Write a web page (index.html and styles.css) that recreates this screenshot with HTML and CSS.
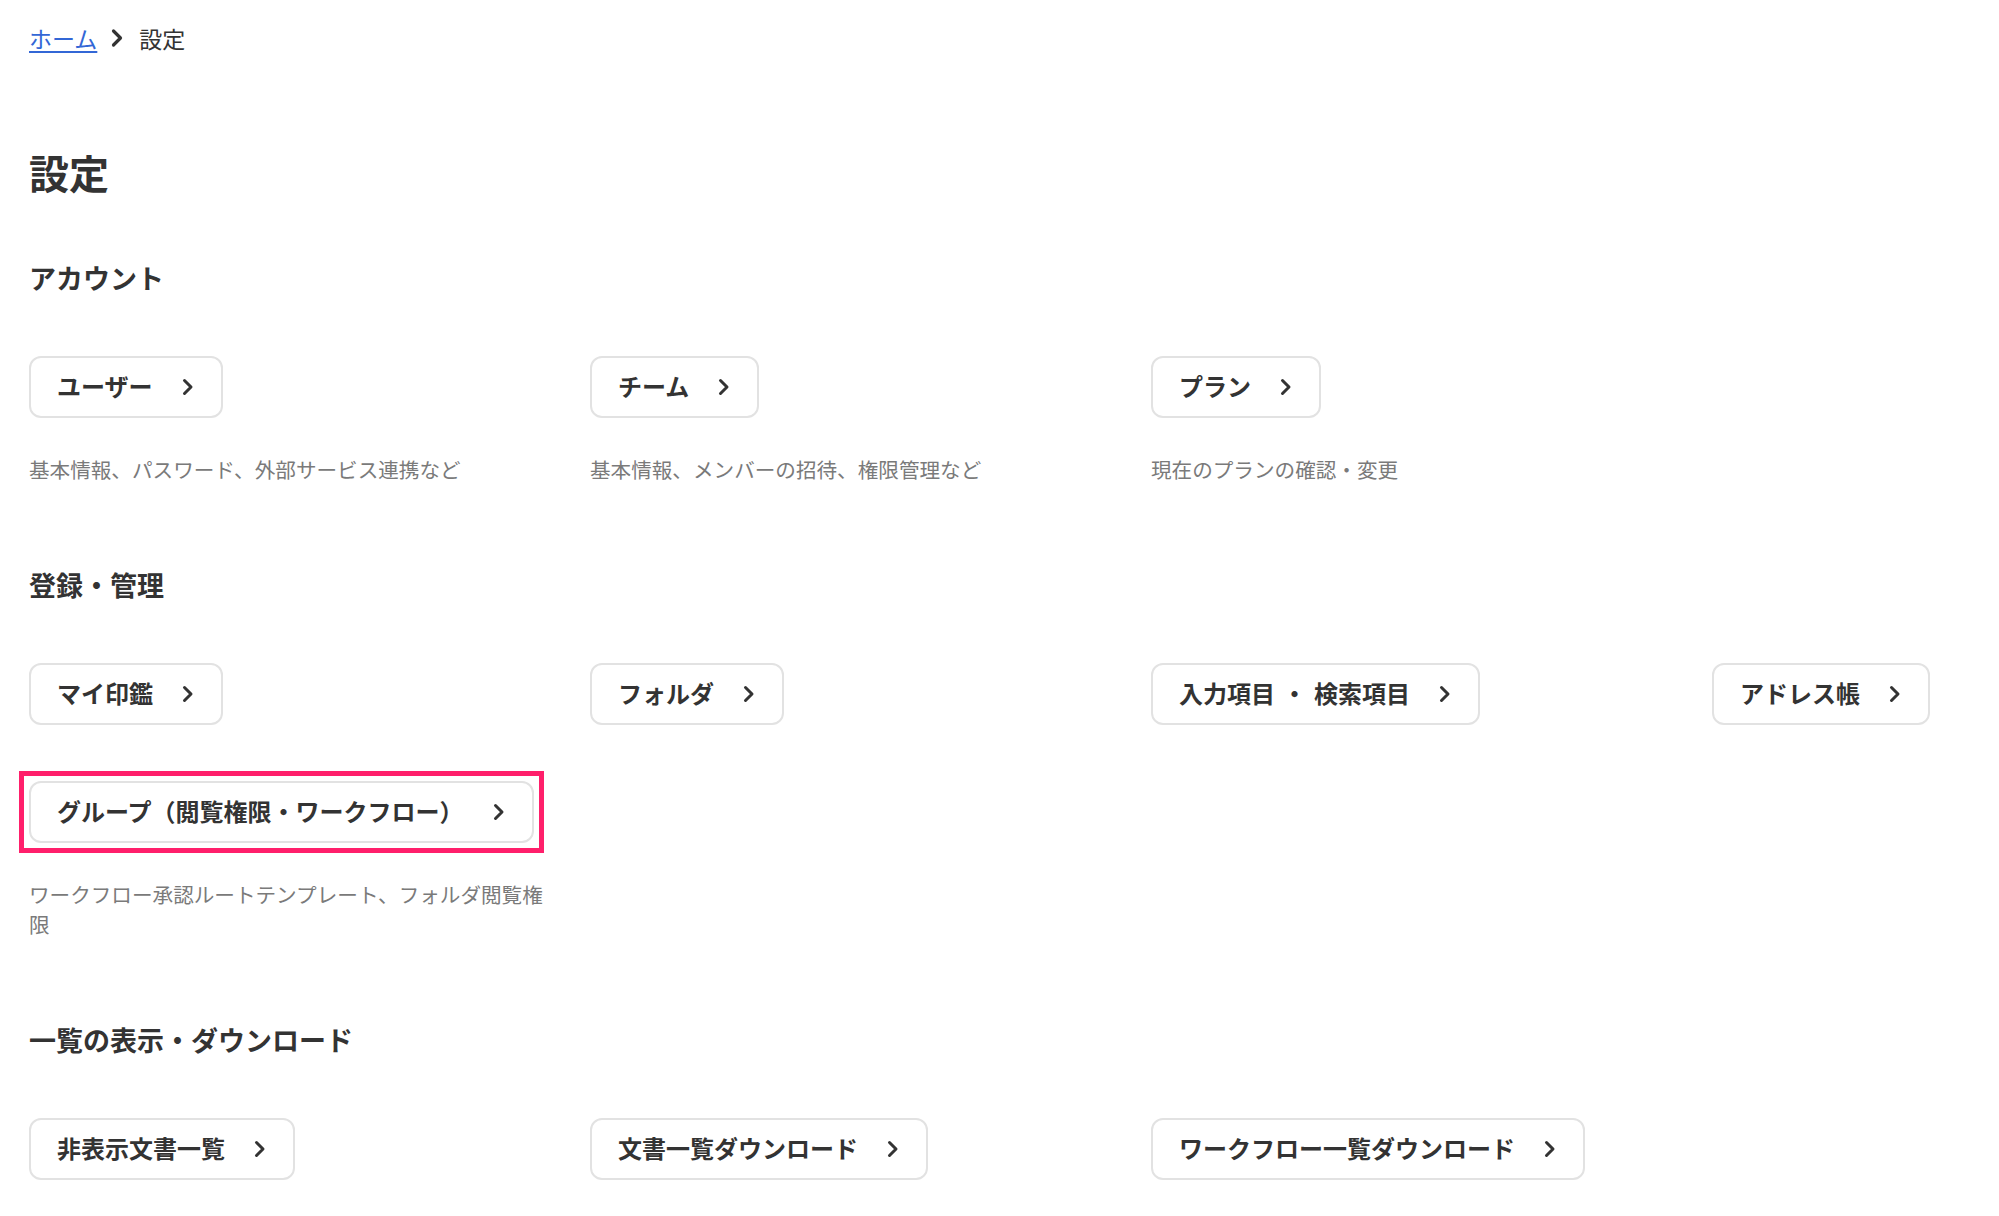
FILE: index.html
```html
<!DOCTYPE html>
<html lang="ja">
<head>
    <meta charset="UTF-8" />
    <title>設定</title>
    <meta name="viewport" content="width=device-width, initial-scale=1" />
    <link rel="stylesheet" href="styles.css">
</head>
<body>
    <nav class="breadcrumb">
        <a href="#">ホーム</a>
        <svg class="crumb-sep" width="14" height="20" viewBox="0 0 14 20"><path d="M3.5 3 L10.5 10 L3.5 17" fill="none" stroke="#333" stroke-width="3.2" stroke-linecap="round" stroke-linejoin="round"/></svg>
        <span>設定</span>
    </nav>

    <h1>設定</h1>

    <section>
        <h2>アカウント</h2>
        <div class="links">
            <div class="link-item">
                <a class="link-btn" href="#">ユーザー <svg class="chev" width="12" height="18" viewBox="0 0 12 18"><path d="M2.5 2.5 L9 9 L2.5 15.5" fill="none" stroke="#333" stroke-width="3" stroke-linecap="round" stroke-linejoin="round"/></svg></a>
                <p class="desc">基本情報、パスワード、外部サービス連携など</p>
            </div>
            <div class="link-item">
                <a class="link-btn" href="#">チーム <svg class="chev" width="12" height="18" viewBox="0 0 12 18"><path d="M2.5 2.5 L9 9 L2.5 15.5" fill="none" stroke="#333" stroke-width="3" stroke-linecap="round" stroke-linejoin="round"/></svg></a>
                <p class="desc">基本情報、メンバーの招待、権限管理など</p>
            </div>
            <div class="link-item">
                <a class="link-btn" href="#">プラン <svg class="chev" width="12" height="18" viewBox="0 0 12 18"><path d="M2.5 2.5 L9 9 L2.5 15.5" fill="none" stroke="#333" stroke-width="3" stroke-linecap="round" stroke-linejoin="round"/></svg></a>
                <p class="desc">現在のプランの確認・変更</p>
            </div>
        </div>
    </section>

    <section>
        <h2>登録・管理</h2>
        <div class="links">
            <div class="link-item">
                <a class="link-btn" href="#">マイ印鑑 <svg class="chev" width="12" height="18" viewBox="0 0 12 18"><path d="M2.5 2.5 L9 9 L2.5 15.5" fill="none" stroke="#333" stroke-width="3" stroke-linecap="round" stroke-linejoin="round"/></svg></a>
            </div>
            <div class="link-item">
                <a class="link-btn" href="#">フォルダ <svg class="chev" width="12" height="18" viewBox="0 0 12 18"><path d="M2.5 2.5 L9 9 L2.5 15.5" fill="none" stroke="#333" stroke-width="3" stroke-linecap="round" stroke-linejoin="round"/></svg></a>
            </div>
            <div class="link-item">
                <a class="link-btn wide-dot" href="#">入力項目 ・ 検索項目 <svg class="chev" width="12" height="18" viewBox="0 0 12 18"><path d="M2.5 2.5 L9 9 L2.5 15.5" fill="none" stroke="#333" stroke-width="3" stroke-linecap="round" stroke-linejoin="round"/></svg></a>
            </div>
            <div class="link-item">
                <a class="link-btn" href="#">アドレス帳 <svg class="chev" width="12" height="18" viewBox="0 0 12 18"><path d="M2.5 2.5 L9 9 L2.5 15.5" fill="none" stroke="#333" stroke-width="3" stroke-linecap="round" stroke-linejoin="round"/></svg></a>
            </div>
            <div class="link-item">
                <!-- highlighted item -->
                <span class="highlight">
                    <a class="link-btn" href="#">グループ（閲覧権限・ワークフロー） <svg class="chev" width="12" height="18" viewBox="0 0 12 18"><path d="M2.5 2.5 L9 9 L2.5 15.5" fill="none" stroke="#333" stroke-width="3" stroke-linecap="round" stroke-linejoin="round"/></svg></a>
                </span>
                <p class="desc">ワークフロー承認ルートテンプレート、フォルダ閲覧権限</p>
            </div>
        </div>
    </section>

    <section>
        <h2>一覧の表示・ダウンロード</h2>
        <div class="links">
            <div class="link-item">
                <a class="link-btn" href="#">非表示文書一覧 <svg class="chev" width="12" height="18" viewBox="0 0 12 18"><path d="M2.5 2.5 L9 9 L2.5 15.5" fill="none" stroke="#333" stroke-width="3" stroke-linecap="round" stroke-linejoin="round"/></svg></a>
            </div>
            <div class="link-item">
                <a class="link-btn" href="#">文書一覧ダウンロード <svg class="chev" width="12" height="18" viewBox="0 0 12 18"><path d="M2.5 2.5 L9 9 L2.5 15.5" fill="none" stroke="#333" stroke-width="3" stroke-linecap="round" stroke-linejoin="round"/></svg></a>
            </div>
            <div class="link-item">
                <a class="link-btn" href="#">ワークフロー一覧ダウンロード <svg class="chev" width="12" height="18" viewBox="0 0 12 18"><path d="M2.5 2.5 L9 9 L2.5 15.5" fill="none" stroke="#333" stroke-width="3" stroke-linecap="round" stroke-linejoin="round"/></svg></a>
            </div>
        </div>
    </section>
</body>
</html>
```

FILE: styles.css
```css
body {
    margin: 0;
    padding: 21px 29px 0;
    font-family: "Noto Sans CJK JP", "Noto Sans", sans-serif;
    color: #333;
    background-color: #fff;
}
.breadcrumb {
    display: flex;
    align-items: center;
    gap: 13px;
    font-size: 23px;
    line-height: 34px;
}
.breadcrumb a {
    color: #3367d6;
    text-decoration: underline;
    text-underline-offset: 3px;
}
.breadcrumb span {
    margin-left: 2px;
}
h1 {
    margin: 89px 0 0;
    font-size: 40px;
    line-height: 56px;
    font-weight: 700;
}
h2 {
    margin: 82px 0 0;
    font-size: 27px;
    line-height: 38px;
    font-weight: 700;
}
section:first-of-type h2 {
    margin-top: 59px;
}
.links {
    display: grid;
    grid-template-columns: repeat(3, 530px) 1fr;
    column-gap: 31px;
    row-gap: 56px;
    margin-top: 59px;
}
.link-item {
    display: flex;
    flex-direction: column;
    align-items: flex-start;
}
.link-btn {
    display: inline-flex;
    align-items: center;
    gap: 29px;
    box-sizing: border-box;
    height: 62px;
    padding: 0 27px 2px 26px;
    border: 2px solid #e2e2e2;
    border-radius: 12px;
    background-color: #fff;
    color: #333;
    font-size: 24px;
    font-weight: 700;
    line-height: 1;
    text-decoration: none;
    white-space: nowrap;
}
.link-btn.wide-dot {
    word-spacing: 2px;
}
.chev {
    flex: none;
    margin-top: 2px;
}
.highlight {
    display: inline-flex;
    margin: -10px;
    padding: 5px;
    border: 5px solid #ff1f6b;
}
.desc {
    margin: 36px 0 0;
    font-size: 20.6px;
    line-height: 30px;
    color: #7a7a7a;
}
```
